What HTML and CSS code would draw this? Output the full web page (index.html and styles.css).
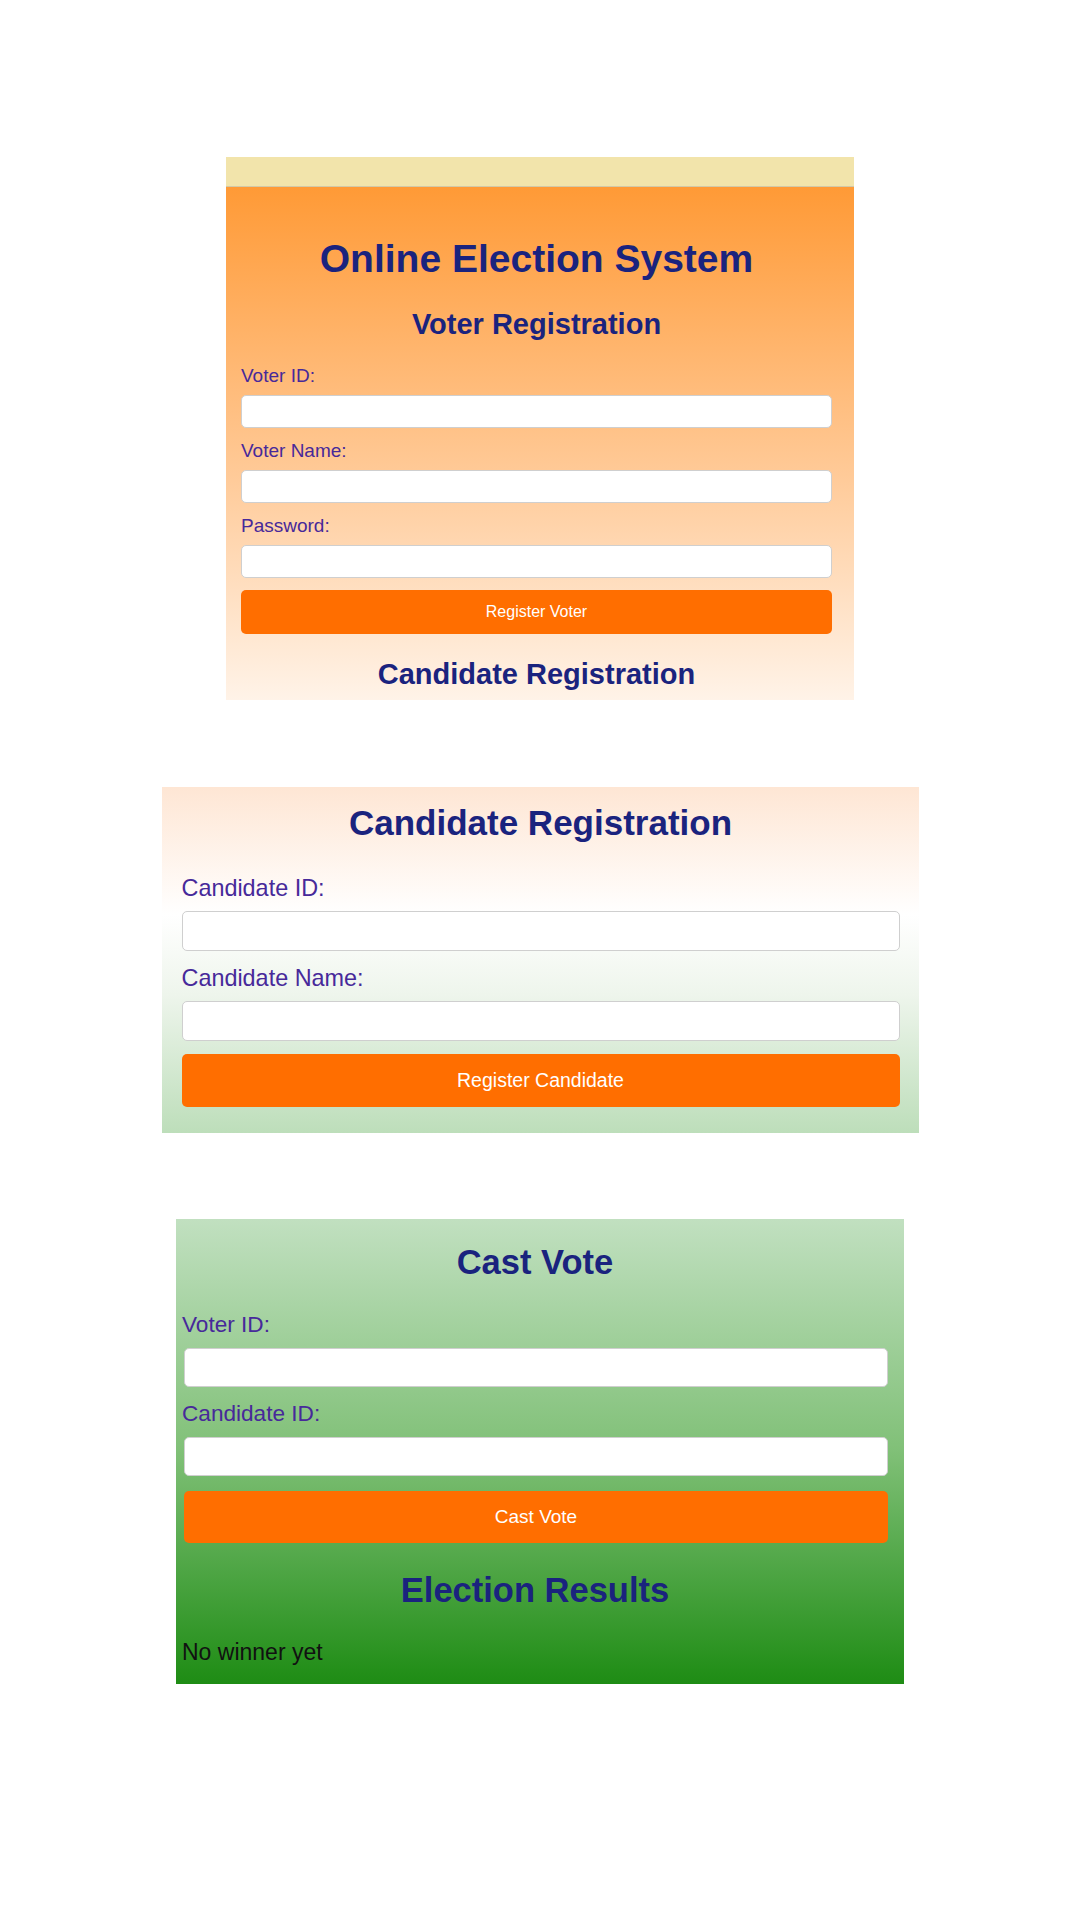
FILE: index.html
```html
<!DOCTYPE html>
<html lang="en">
<head>
<meta charset="utf-8">
<title>Online Election System</title>
<link rel="stylesheet" href="styles.css">
</head>
<body>
<main class="page">
  <section class="panel panel-one">
    <div class="band"></div>
    <div class="panel-body">
      <h1 class="title">Online Election System</h1>
      <h2 class="heading">Voter Registration</h2>
      <label class="label">Voter ID:</label>
      <input class="field" type="text">
      <label class="label">Voter Name:</label>
      <input class="field" type="text">
      <label class="label">Password:</label>
      <input class="field" type="password">
      <button class="btn">Register Voter</button>
      <h2 class="heading heading-last">Candidate Registration</h2>
    </div>
  </section>

  <section class="panel panel-two">
    <h2 class="heading">Candidate Registration</h2>
    <label class="label">Candidate ID:</label>
    <input class="field" type="text">
    <label class="label">Candidate Name:</label>
    <input class="field" type="text">
    <button class="btn">Register Candidate</button>
  </section>

  <section class="panel panel-three">
    <h2 class="heading">Cast Vote</h2>
    <label class="label">Voter ID:</label>
    <input class="field" type="text">
    <label class="label">Candidate ID:</label>
    <input class="field" type="text">
    <button class="btn">Cast Vote</button>
    <h2 class="heading results">Election Results</h2>
    <p class="winner">No winner yet</p>
  </section>
</main>
</body>
</html>
```

FILE: styles.css
```css
* { box-sizing: border-box; }

html, body {
  margin: 0;
  padding: 0;
  background: #ffffff;
  font-family: "Liberation Sans", Arial, sans-serif;
}

.page {
  display: flex;
  flex-direction: column;
  align-items: center;
  padding-top: 157px;
  height: 1920px;
}

.panel {
  display: flex;
  flex-direction: column;
  overflow: hidden;
  flex: none;
}

.heading, .title {
  margin: 0;
  text-align: center;
  color: #1a237e;
  font-weight: bold;
}

.label {
  display: block;
  color: #47299a;
}

.field {
  display: block;
  width: 100%;
  background: #ffffff;
  border: 1px solid #cfcfcf;
  border-radius: 5px;
  margin: 0;
  padding: 0 8px;
  font: inherit;
}

.btn {
  display: block;
  width: 100%;
  border: none;
  background: #ff6e00;
  color: #ffffff;
  border-radius: 5px;
  font-family: "Liberation Sans", Arial, sans-serif;
  margin: 0;
  padding: 0;
}

/* Panel one */
.panel-one {
  width: 628px;
  height: 543px;
}
.band {
  height: 30px;
  flex: none;
  background: #f2e4ab;
  border-bottom: 1px solid #d2c9a8;
}
.panel-one .panel-body {
  flex: 1;
  background: linear-gradient(#ff9a36 0%, #ffc996 55%, #fff3e8 100%);
  padding: 50px 22px 0 15px;
}
.panel-one .title {
  font-size: 39px;
  line-height: 44px;
}
.panel-one .heading {
  font-size: 29px;
  line-height: 34px;
  margin-top: 26px;
}
.panel-one .heading-last {
  margin-top: 23px;
}
.panel-one .label {
  font-size: 19px;
  line-height: 22px;
  margin-top: 12px;
  margin-bottom: 8px;
}
.panel-one .heading + .label {
  margin-top: 24px;
}
.panel-one .field {
  height: 33px;
}
.panel-one .btn {
  height: 44px;
  margin-top: 12px;
  font-size: 16px;
}

/* Panel two */
.panel-two {
  width: 757px;
  height: 346px;
  margin-top: 87px;
  padding: 16px 19px 0 20px;
  background: linear-gradient(#fee6d4 0%, #ffffff 37%, #eef5ec 60%, #bddeba 100%);
}
.panel-two .heading {
  font-size: 35px;
  line-height: 40px;
}
.panel-two .label {
  font-size: 23.4px;
  line-height: 27px;
  margin-top: 14px;
  margin-bottom: 9px;
}
.panel-two .heading + .label {
  margin-top: 32px;
}
.panel-two .field {
  height: 40px;
}
.panel-two .btn {
  height: 53px;
  margin-top: 13px;
  font-size: 19.5px;
}

/* Panel three */
.panel-three {
  width: 728px;
  height: 465px;
  margin-top: 86px;
  padding: 23px 16px 0 6px;
  background: linear-gradient(#c1e0c0 0%, #80c077 50%, #1e8c14 100%);
}
.panel-three .heading {
  font-size: 34.5px;
  line-height: 40px;
}
.panel-three .label {
  font-size: 22.6px;
  line-height: 26px;
  margin-top: 14px;
  margin-bottom: 10px;
}
.panel-three .heading + .label {
  margin-top: 30px;
}
.panel-three .field {
  height: 39px;
  margin-left: 2px;
  width: calc(100% - 2px);
}
.panel-three .btn {
  height: 52px;
  margin-top: 15px;
  margin-left: 2px;
  width: calc(100% - 2px);
  font-size: 19px;
}
.panel-three .results {
  margin-top: 27px;
}
.winner {
  margin: 29px 0 0;
  font-size: 23px;
  line-height: 27px;
  color: #111111;
}
```
